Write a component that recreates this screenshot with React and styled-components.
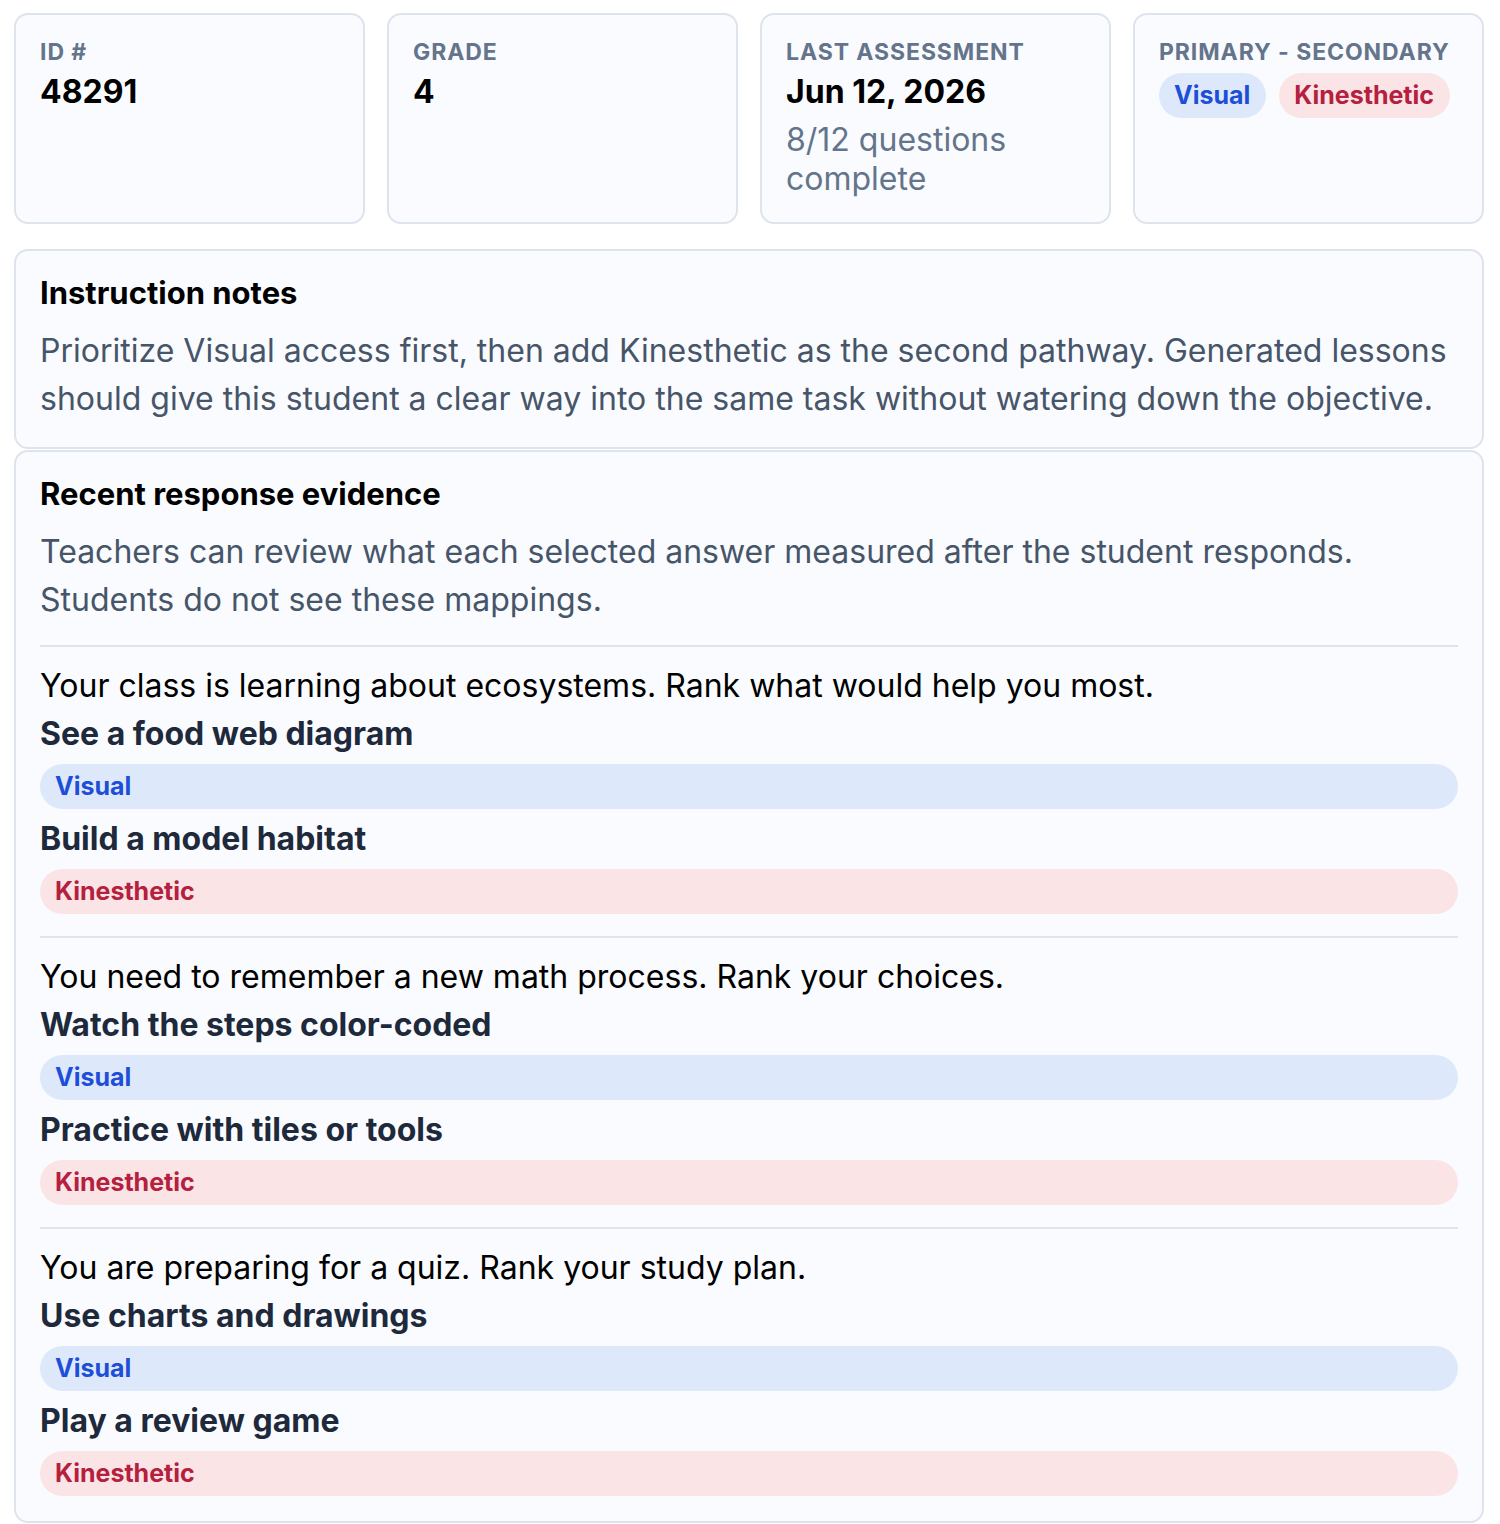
import React from "react";
import styled, { createGlobalStyle } from "styled-components";

const GlobalStyle = createGlobalStyle`
  body {
    margin: 0;
    background: #ffffff;
    font-family: Inter, "Noto Sans", sans-serif;
    color: #0f172a;
  }
`;

const Page = styled.div`
  padding: 13px 16px 0 14px;
  display: flex;
  flex-direction: column;
`;

// top stat cards
const StatGrid = styled.div`
  display: grid;
  grid-template-columns: repeat(4, 1fr);
  gap: 22px;
  margin-bottom: 25px;
`;

const Card = styled.div`
  background: #f9fbfe;
  border: 2px solid #dde4ee;
  border-radius: 14px;
  padding: 24px;
  display: flex;
  flex-direction: column;
  gap: 8px;
`;

const Panel = styled(Card)`
  gap: 0;
  padding-bottom: ${(p) => (p.$stacked ? "25px" : "24px")};
  margin-top: ${(p) => (p.$stacked ? "1px" : "0")};
`;

const Label = styled.div`
  font-size: 23px;
  line-height: 26px;
  font-weight: 700;
  letter-spacing: 0.04em;
  text-transform: uppercase;
  color: #64748b;
`;

const Value = styled.div`
  font-size: 32px;
  line-height: 38px;
  font-weight: 700;
  color: #000;
`;

const SubText = styled.div`
  font-size: 32px;
  line-height: 39px;
  margin-top: 1px;
  color: #64748b;
`;

const PillRow = styled.div`
  display: flex;
  gap: 13px;
`;

const Pill = styled.span`
  display: ${(p) => (p.$wide ? "block" : "inline-block")};
  font-size: 25px;
  line-height: 29px;
  font-weight: 700;
  padding: 8px 16px 8px 15px;
  border-radius: 999px;
  background: ${(p) => (p.$kind === "Visual" ? "#dde9fb" : "#fbe4e6")};
  color: ${(p) => (p.$kind === "Visual" ? "#1d4ed8" : "#b4203e")};
`;

const Heading = styled.h2`
  margin: 0 0 16px;
  font-size: 31px;
  line-height: 36px;
  font-weight: 700;
  color: #000;
`;

const Body = styled.p`
  margin: 0;
  font-size: 32px;
  line-height: 48px;
  color: #475569;
`;

const Question = styled.div`
  margin-top: 22px;
  border-top: 2px solid #dde4ee;
  padding-top: 15px;
  display: flex;
  flex-direction: column;
  gap: 6px;

  &:first-of-type {
    margin-top: 21px;
  }
`;

const Prompt = styled.div`
  font-size: 32px;
  line-height: 48px;
  color: #000;
  margin-bottom: -6px;
`;

const Option = styled.div`
  font-size: 32px;
  line-height: 48px;
  font-weight: 700;
  color: #1e293b;
`;

const questions = [
  {
    prompt: "Your class is learning about ecosystems. Rank what would help you most.",
    options: [
      ["See a food web diagram", "Visual"],
      ["Build a model habitat", "Kinesthetic"],
    ],
  },
  {
    prompt: "You need to remember a new math process. Rank your choices.",
    options: [
      ["Watch the steps color-coded", "Visual"],
      ["Practice with tiles or tools", "Kinesthetic"],
    ],
  },
  {
    prompt: "You are preparing for a quiz. Rank your study plan.",
    options: [
      ["Use charts and drawings", "Visual"],
      ["Play a review game", "Kinesthetic"],
    ],
  },
];

const App = () => {
  return (
    <Page>
      <GlobalStyle />
      <StatGrid>
        <Card>
          <Label>ID #</Label>
          <Value>48291</Value>
        </Card>
        <Card>
          <Label>Grade</Label>
          <Value>4</Value>
        </Card>
        <Card>
          <Label>Last assessment</Label>
          <Value>Jun 12, 2026</Value>
          <SubText>8/12 questions complete</SubText>
        </Card>
        <Card>
          <Label>Primary - Secondary</Label>
          <PillRow>
            <Pill $kind="Visual">Visual</Pill>
            <Pill $kind="Kinesthetic">Kinesthetic</Pill>
          </PillRow>
        </Card>
      </StatGrid>

      <Panel>
        <Heading>Instruction notes</Heading>
        <Body>
          Prioritize Visual access first, then add Kinesthetic as the second pathway. Generated
          lessons should give this student a clear way into the same task without watering down
          the objective.
        </Body>
      </Panel>

      <Panel $stacked>
        <Heading>Recent response evidence</Heading>
        <Body>
          Teachers can review what each selected answer measured after the student responds.
          Students do not see these mappings.
        </Body>
        {questions.map((q) => (
          <Question key={q.prompt}>
            <Prompt>{q.prompt}</Prompt>
            {q.options.map(([text, kind]) => (
              <React.Fragment key={text}>
                <Option>{text}</Option>
                <Pill $wide $kind={kind}>
                  {kind}
                </Pill>
              </React.Fragment>
            ))}
          </Question>
        ))}
      </Panel>
    </Page>
  );
};

export default App;
